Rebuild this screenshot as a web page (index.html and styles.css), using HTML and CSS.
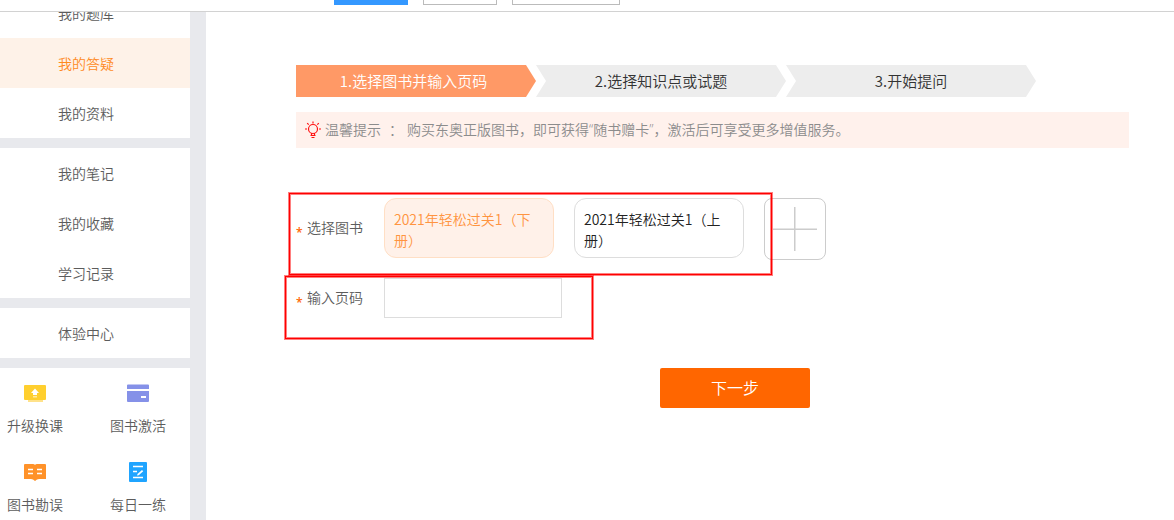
FILE: index.html
```html
<!DOCTYPE html>
<html lang="zh-CN">
<head>
    <meta charset="UTF-8">
    <meta name="viewport" content="width=device-width, initial-scale=1.0">
    <title>我的答疑</title>
    <link rel="stylesheet" href="styles.css">
</head>
<body>
    <header class="topbar">
        <button class="tab tab-active" aria-label="tab 1"></button>
        <button class="tab" aria-label="tab 2"></button>
        <button class="tab tab-wide" aria-label="tab 3"></button>
    </header>

    <div class="page">
        <aside class="sidebar">
            <nav class="menu">
                <div class="menu-group">
                    <a href="#">我的题库</a>
                    <a href="#" class="active">我的答疑</a>
                    <a href="#">我的资料</a>
                </div>
                <div class="menu-group">
                    <a href="#">我的笔记</a>
                    <a href="#">我的收藏</a>
                    <a href="#">学习记录</a>
                </div>
                <div class="menu-group">
                    <a href="#">体验中心</a>
                </div>
            </nav>
            <div class="tools">
                <a href="#">
                    <svg width="22" height="20" viewBox="0 0 22 20">
                        <rect y="2" width="22" height="15" rx="1" fill="#ffcf2e"/>
                        <rect x="4" y="17" width="15" height="2" fill="#ffe28a"/>
                        <path d="M11 5.500l4 4.500h-2v2H9v-2H7z" fill="#fff"/>
                        <path d="M9 13h4v1.500H9z" fill="#ffe9a0"/>
                    </svg>
                    升级换课
                </a>
                <a href="#">
                    <svg width="22" height="20" viewBox="0 0 22 20">
                        <path d="M0 2.500a1 1 0 0 1 1-1h20a1 1 0 0 1 1 1V6H0zM0 8h22v10a1 1 0 0 1-1 1H1a1 1 0 0 1-1-1z" fill="#8591e8"/>
                        <rect x="14" y="13" width="5" height="2" fill="#fff"/>
                    </svg>
                    图书激活
                </a>
                <a href="#">
                    <svg width="22" height="20" viewBox="0 0 22 20">
                        <path d="M0 3q0-1 1-1h8q1.500 0 2 1 .5-1 2-1h8q1 0 1 1v14h-7q-2 0-4 2-2-2-4-2H0z" fill="#ff9229"/>
                        <path d="M4 7.500h5M4 11.500h5M13 7.500h5M13 11.500h5" stroke="#fff" stroke-width="1.500"/>
                    </svg>
                    图书勘误
                </a>
                <a href="#">
                    <svg width="22" height="20" viewBox="0 0 22 20">
                        <rect x="2" y="0" width="18" height="20" rx="1" fill="#1fa4ff"/>
                        <path d="M6 4.500h10M6 9.500h4M6 15.500h10" stroke="#fff" stroke-width="1.300"/>
                        <path d="M10 13.500l.5-1.500 4.500-4 1.200 1.200-4.500 4z" fill="#fff"/>
                    </svg>
                    每日一练
                </a>
            </div>
        </aside>

        <main class="content">
            <ol class="steps">
                <li class="current">1.选择图书并输入页码</li>
                <li>2.选择知识点或试题</li>
                <li>3.开始提问</li>
            </ol>

            <p class="tip">
                <svg width="16" height="18" viewBox="0 0 16 18" fill="none" stroke="#f11" stroke-width="1.200">
                    <circle cx="8" cy="8" r="4.500"/>
                    <path d="M6.500 12v2M9.500 12v2M8 .5v2M0 8h2M14 8h2M2.200 2.200l1.500 1.500M13.800 2.200l-1.500 1.500"/>
                    <path d="M5.500 14.500h5M6.500 16.500h3"/>
                </svg>
                <span>温馨提示</span>
                <span class="colon">：</span>
                <span>购买东奥正版图书，即可获得<q>随书赠卡</q>，激活后可享受更多增值服务。</span>
            </p>

            <form class="ask-form">
                <div class="row books">
                    <span class="label"><i>*</i>选择图书</span>
                    <div class="book-list">
                        <button type="button" class="book selected">2021年轻松过关1（下册）</button>
                        <button type="button" class="book">2021年轻松过关1（上册）</button>
                        <button type="button" class="add-book" aria-label="添加图书">
                            <svg width="44" height="44" viewBox="0 0 44 44" fill="#ccc">
                                <path d="M21 0h1.500v44H21zM0 21.500h44V23H0z"/>
                            </svg>
                        </button>
                    </div>
                </div>
                <div class="row page-no">
                    <label class="label" for="pageNo"><i>*</i>输入页码</label>
                    <input type="text" id="pageNo">
                </div>
                <button type="submit" class="next">下一步</button>
            </form>
        </main>
    </div>
</body>
</html>
```
FILE: styles.css
```css
*, *::after {
    box-sizing: border-box;
}

body {
    display: flex;
    flex-direction: column;
    height: 100vh;
    margin: 0;
    overflow: hidden;
    background: #fff;
    color: #5c5c5c;
    font-family: "Noto Sans CJK SC", sans-serif;
    font-size: 14px;
    font-weight: 350;
}

a {
    color: inherit;
    text-decoration: none;
}

button, input {
    font: inherit;
}

svg {
    flex: none;
}

/* top bar */
.topbar {
    display: flex;
    flex: none;
    align-items: flex-start;
    gap: 15px;
    height: 12px;
    padding-left: 334px;
    border-bottom: 1px solid #d2d2d2;
}

.tab {
    width: 74px;
    height: 5px;
    padding: 0;
    border: 1px solid #bbb;
    border-top: 0;
    background: #fff;
}

.tab-active {
    border-color: #3498ff;
    background: #3498ff;
}

.tab-wide {
    width: 108px;
}

.page {
    display: flex;
    flex: 1;
    min-height: 0;
    overflow: hidden;
}

/* sidebar */
.sidebar {
    display: flex;
    flex: none;
    flex-direction: column;
    width: 206px;
    padding-right: 16px;
    overflow: hidden;
    background: #e8e9ed;
}

.menu {
    flex: none;
    margin-top: -24px;
}

.menu-group {
    margin-bottom: 10px;
    background: #fff;
}

.menu-group a {
    display: block;
    padding-left: 58px;
    line-height: 50px;
}

.menu-group .active {
    background: #fef2e8;
    color: #ff8a1d;
}

.tools {
    display: grid;
    flex: 1 0 auto;
    grid-template-columns: 70px 70px;
    grid-auto-rows: 79px;
    column-gap: 33px;
    padding-top: 15px;
    background: #fff;
}

.tools a {
    display: flex;
    flex-direction: column;
    align-items: center;
    gap: 12px;
    line-height: 20px;
}

/* content */
.content {
    flex: 1;
    padding: 53px 0 0 90px;
}

.steps {
    display: flex;
    margin: 0;
    padding: 0;
    list-style: none;
    color: #333;
    font-size: 15px;
    line-height: 32px;
    text-align: center;
}

.steps li {
    width: 250px;
    background: #ededed;
    clip-path: polygon(0 0, 240px 0, 100% 50%, 240px 100%, 0 100%, 10px 50%);
}

.steps .current {
    width: 240px;
    padding-right: 5px;
    background: #ff9966;
    color: #fff;
    clip-path: polygon(0 0, 230px 0, 100% 50%, 230px 100%, 0 100%);
}

.tip {
    display: flex;
    align-items: center;
    gap: 4px;
    height: 36px;
    margin: 15px 45px 50px 0;
    padding-left: 9px;
    background: #fff1ec;
    color: #8c8c8c;
    line-height: 20px;
}

.tip span {
    padding-bottom: 2px;
}

.tip .colon {
    width: 18px;
    text-align: right;
}

.tip q {
    font-family: "Open Sans", "Noto Sans CJK SC", sans-serif;
    quotes: "“" "”";
}

.row {
    display: flex;
    position: relative;
}

.books {
    height: 80px;
}

.label {
    width: 88px;
    line-height: 38px;
}

.books .label {
    line-height: 58px;
}

.label i {
    display: inline-block;
    width: 11px;
    color: #ff6600;
    font-family: "Open Sans", sans-serif;
    font-size: 12px;
    font-style: normal;
    font-weight: 600;
    line-height: 12px;
    vertical-align: -4px;
}

.book-list {
    display: flex;
    align-items: flex-start;
    gap: 20px;
}

.book {
    width: 170px;
    height: 60px;
    padding: 3px 9px 0;
    border: 1px solid #ddd;
    border-radius: 12px;
    background: #fff;
    color: #222;
    line-height: 21px;
    text-align: left;
}

.book.selected {
    border-color: #ffdfc5;
    background: #fff1e9;
    color: #ff9440;
}

.add-book {
    display: flex;
    align-items: center;
    width: 62px;
    height: 62px;
    padding: 0 8px;
    border: 1px solid #ccc;
    border-radius: 8px;
    background: #fff;
}

.page-no input {
    width: 178px;
    height: 40px;
    padding: 0 10px;
    border: 1px solid #ddd;
}

/* red frames over the required fields */
.row::after {
    position: absolute;
    border: 1px solid #f00;
    box-shadow: 0 0 0 1px rgba(255, 0, 0, 0.5), inset 0 0 0 1px rgba(255, 0, 0, 0.5);
    content: "";
    pointer-events: none;
}

.books::after {
    top: -5px;
    left: -7px;
    width: 483px;
    height: 82px;
}

.page-no::after {
    top: -2px;
    left: -11px;
    width: 308px;
    height: 63px;
}

.next {
    display: block;
    width: 150px;
    height: 40px;
    margin: 50px auto 0;
    padding: 0 0 2px;
    border: 0;
    border-radius: 2px;
    background: #ff6600;
    color: #fff;
    font-size: 16px;
}
```
